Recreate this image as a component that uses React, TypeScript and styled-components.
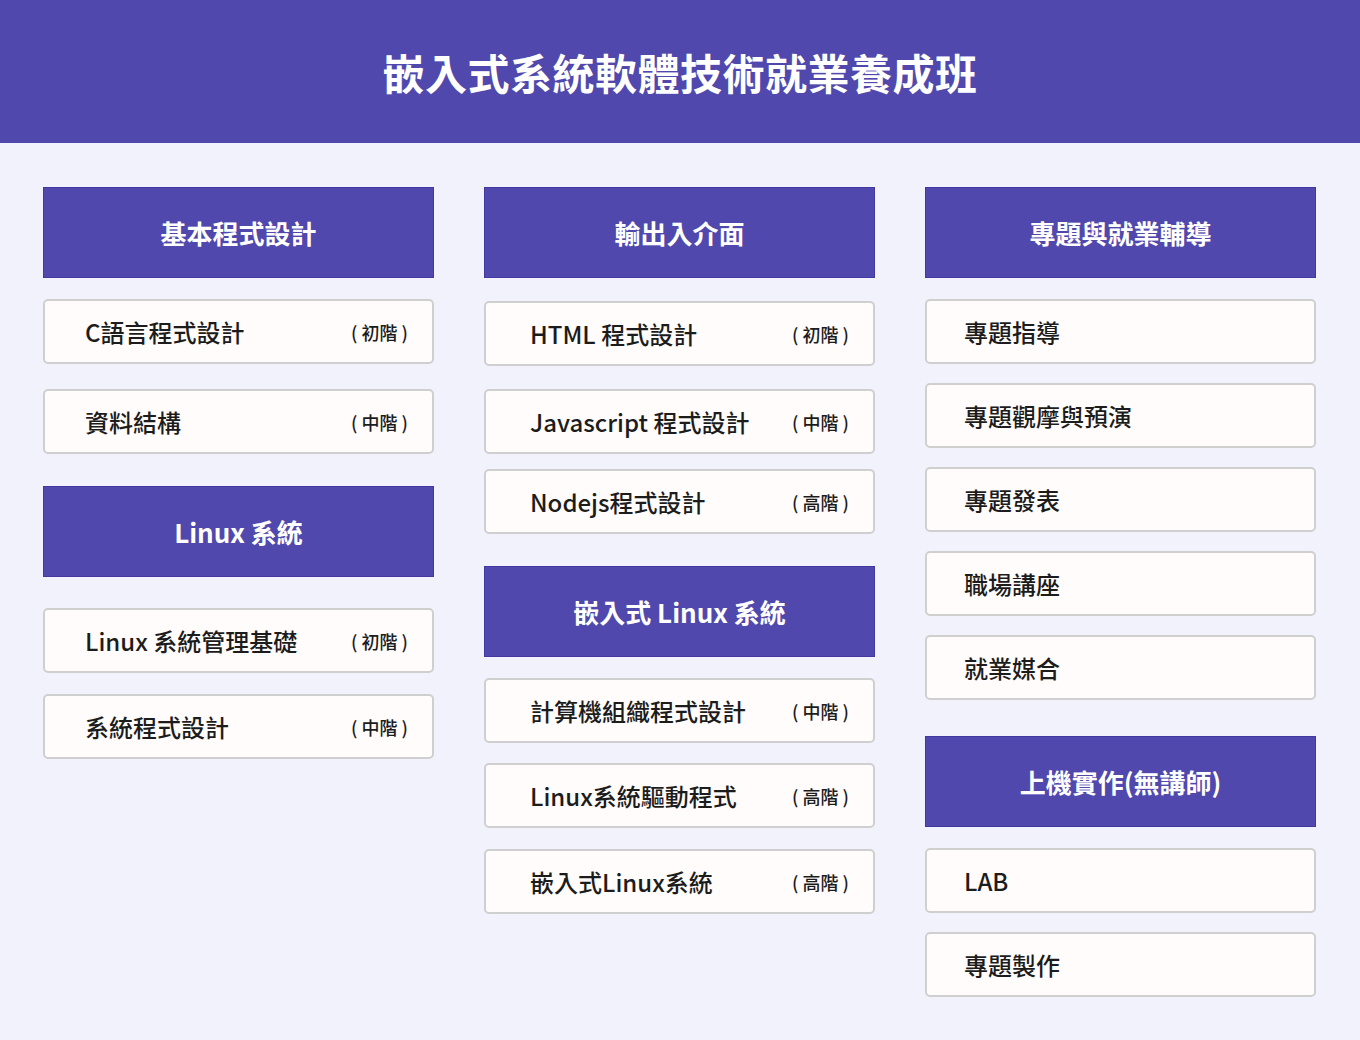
import React from "react";
import styled, { createGlobalStyle } from "styled-components";

const Global = createGlobalStyle`
  body { margin: 0; background: #f2f2fc; font-family: "Noto Sans CJK TC", "Noto Sans", sans-serif; }
`;

const Page = styled.div`
  width: 1360px; height: 1040px; background: #f2f2fc; overflow: hidden;
`;
const TitleBar = styled.header`
  height: 143px; background: #5048ad; color: #fff;
  display: flex; align-items: center; justify-content: center;
  font-size: 42px; font-weight: 700; letter-spacing: 0.5px;
`;
const Columns = styled.div`
  display: grid; grid-template-columns: 391px 391px 391px;
  column-gap: 50px; padding: 44px 0 0 43px;
`;
const Column = styled.div`display: flex; flex-direction: column;`;
const Head = styled.div<{ $mt: number }>`
  margin-top: ${p => p.$mt}px; height: 91px; background: #5048ad; color: #fff;
  border: 1px solid #4338a0; box-sizing: border-box;
  display: flex; align-items: center; justify-content: center;
  font-size: 26px; font-weight: 700;
`;
const Item = styled.div<{ $mt: number; $pad: number }>`
  margin-top: ${p => p.$mt}px; height: 65px; box-sizing: border-box;
  background: #fffcfb; border: 2px solid #cfcfcf; border-radius: 5px;
  display: flex; align-items: center; justify-content: space-between;
  padding: 0 24px 0 ${p => p.$pad}px; color: #1c1c1c; font-size: 24px; font-weight: 500;
`;
const Level = styled.span`font-size: 18px; font-weight: 500; white-space: pre;`;

type E = { h?: string; t?: string; l?: string; mt: number };
const cols: { pad: number; items: E[] }[] = [
  { pad: 40, items: [
    { h: "基本程式設計", mt: 0 },
    { t: "C語言程式設計", l: "初階", mt: 21 },
    { t: "資料結構", l: "中階", mt: 25 },
    { h: "Linux 系統", mt: 32 },
    { t: "Linux 系統管理基礎", l: "初階", mt: 31 },
    { t: "系統程式設計", l: "中階", mt: 21 },
  ]},
  { pad: 44, items: [
    { h: "輸出入介面", mt: 0 },
    { t: "HTML 程式設計", l: "初階", mt: 23 },
    { t: "Javascript 程式設計", l: "中階", mt: 23 },
    { t: "Nodejs程式設計", l: "高階", mt: 15 },
    { h: "嵌入式 Linux 系統", mt: 32 },
    { t: "計算機組織程式設計", l: "中階", mt: 21 },
    { t: "Linux系統驅動程式", l: "高階", mt: 20 },
    { t: "嵌入式Linux系統", l: "高階", mt: 21 },
  ]},
  { pad: 37, items: [
    { h: "專題與就業輔導", mt: 0 },
    { t: "專題指導", mt: 21 },
    { t: "專題觀摩與預演", mt: 19 },
    { t: "專題發表", mt: 19 },
    { t: "職場講座", mt: 19 },
    { t: "就業媒合", mt: 19 },
    { h: "上機實作(無講師)", mt: 36 },
    { t: "LAB", mt: 21 },
    { t: "專題製作", mt: 19 },
  ]},
];

export default function App() {
  return (
    <Page>
      <Global />
      <TitleBar>嵌入式系統軟體技術就業養成班</TitleBar>
      <Columns>
        {cols.map((c, i) => (
          <Column key={i}>
            {c.items.map((e, j) =>
              e.h ? <Head key={j} $mt={e.mt}>{e.h}</Head> :
              <Item key={j} $mt={e.mt} $pad={c.pad}>
                <span>{e.t}</span>
                {e.l && <Level>{`( ${e.l} )`}</Level>}
              </Item>
            )}
          </Column>
        ))}
      </Columns>
    </Page>
  );
}
